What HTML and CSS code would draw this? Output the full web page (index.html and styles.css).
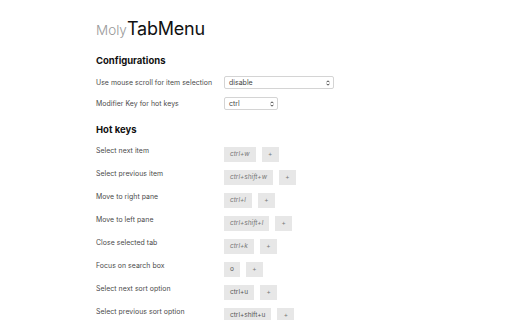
FILE: index.html
```html
<!DOCTYPE html>
<html>
<head>
<meta charset="utf-8">
<link rel="stylesheet" href="styles.css">
</head>
<body>
<div class="page">
  <h1 class="title"><span class="title-light">Moly</span>TabMenu</h1>

  <h2 class="section">Configurations</h2>
  <div class="config">
    <div class="crow">
      <div class="label">Use mouse scroll for item selection</div>
      <div class="select wide"><span>disable</span><svg class="arrows" width="4" height="6" viewBox="0 0 4 6"><path d="M0.5 2.3 L2 0.8 L3.5 2.3 M0.5 3.7 L2 5.2 L3.5 3.7" fill="none" stroke="#333" stroke-width="0.9"/></svg></div>
    </div>
    <div class="crow">
      <div class="label">Modifier Key for hot keys</div>
      <div class="select narrow"><span>ctrl</span><svg class="arrows" width="4" height="6" viewBox="0 0 4 6"><path d="M0.5 2.3 L2 0.8 L3.5 2.3 M0.5 3.7 L2 5.2 L3.5 3.7" fill="none" stroke="#333" stroke-width="0.9"/></svg></div>
    </div>
  </div>

  <h2 class="section hk">Hot keys</h2>
  <div class="hotkeys">
    <div class="hrow"><div class="label">Select next item</div><div class="keys"><span class="key ph">ctrl+w</span><span class="key plus">+</span></div></div>
    <div class="hrow"><div class="label">Select previous item</div><div class="keys"><span class="key ph">ctrl+shift+w</span><span class="key plus">+</span></div></div>
    <div class="hrow"><div class="label">Move to right pane</div><div class="keys"><span class="key ph">ctrl+l</span><span class="key plus">+</span></div></div>
    <div class="hrow"><div class="label">Move to left pane</div><div class="keys"><span class="key ph">ctrl+shift+l</span><span class="key plus">+</span></div></div>
    <div class="hrow"><div class="label">Close selected tab</div><div class="keys"><span class="key ph">ctrl+k</span><span class="key plus">+</span></div></div>
    <div class="hrow"><div class="label">Focus on search box</div><div class="keys"><span class="key">o</span><span class="key plus">+</span></div></div>
    <div class="hrow"><div class="label">Select next sort option</div><div class="keys"><span class="key">ctrl+u</span><span class="key plus">+</span></div></div>
    <div class="hrow"><div class="label">Select previous sort option</div><div class="keys"><span class="key">ctrl+shift+u</span><span class="key plus">+</span></div></div>
  </div>
</div>
</body>
</html>
```
FILE: styles.css
```css
html, body {
  margin: 0;
  padding: 0;
  background: #fff;
}
body {
  font-family: Inter, "Liberation Sans", sans-serif;
  color: #222;
  overflow: hidden;
}
.page {
  padding: 17px 0 0 96px;
}
.title {
  margin: 0;
  font-size: 18px;
  line-height: 24px;
  font-weight: 400;
  color: #111;
  letter-spacing: -0.2px;
}
.title-light {
  font-size: 13.5px;
  color: #999;
  font-weight: 300;
  letter-spacing: 0;
}
.section {
  margin: 13px 0 0;
  font-size: 9.5px;
  line-height: 12px;
  font-weight: 700;
  color: #111;
}
.section.hk {
  margin-top: 14px;
}
.config {
  margin-top: 9px;
  display: flex;
  flex-direction: column;
  gap: 8px;
}
.crow {
  display: flex;
  align-items: center;
  height: 13px;
}
.label {
  width: 128px;
  flex: none;
  font-size: 6.9px;
  line-height: 10px;
  color: #4a4a4a;
  letter-spacing: 0.05px;
}
.select {
  box-sizing: border-box;
  height: 13px;
  border: 1px solid #d4d4d4;
  border-radius: 2px;
  background: #fff;
  display: flex;
  align-items: center;
  justify-content: space-between;
  padding: 0 3px 0 4px;
  font-size: 7px;
  color: #444;
}
.select.wide { width: 110px; }
.select.narrow { width: 54px; }
.arrows { display: block; }
.hotkeys {
  margin-top: 11px;
  display: flex;
  flex-direction: column;
  gap: 8px;
}
.hrow {
  display: flex;
  align-items: flex-start;
  height: 15px;
}
.hrow .label {
  margin-top: -1px;
}
.keys {
  display: flex;
  gap: 6px;
}
.key {
  display: block;
  height: 15px;
  line-height: 15px;
  padding: 0 6px;
  background: #e7e7e7;
  font-size: 6.5px;
  color: #555;
}
.key.ph {
  font-style: italic;
  color: #777;
}
.key.plus {
  width: 17px;
  padding: 0;
  text-align: center;
  color: #777;
}
```
